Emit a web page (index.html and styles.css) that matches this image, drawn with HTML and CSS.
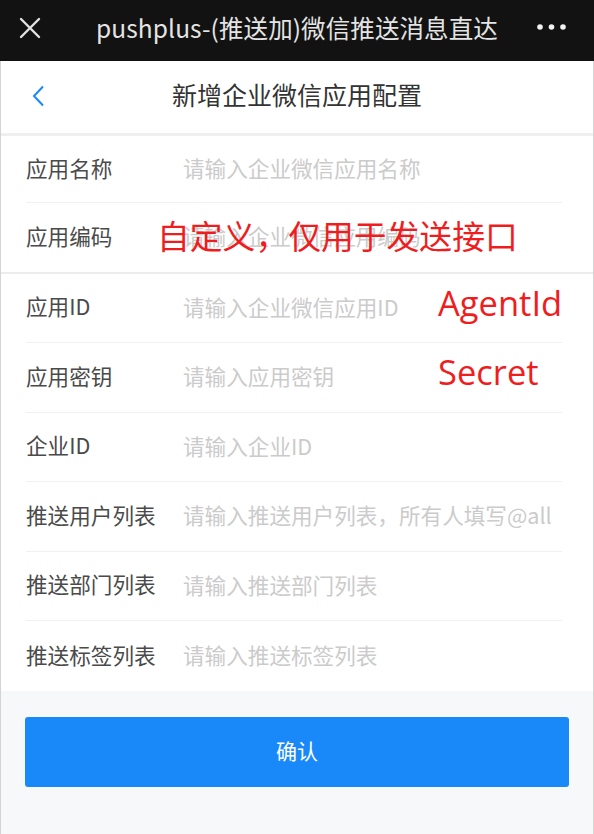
FILE: index.html
```html
<!DOCTYPE html>
<html lang="zh-CN">
<head>
<meta charset="utf-8">
<title>新增企业微信应用配置</title>
<link rel="stylesheet" href="styles.css">
</head>
<body>
<div class="topbar">
  <svg class="close-icon" width="22" height="22" viewBox="0 0 22 22"><path d="M2 2 L20 20 M20 2 L2 20" stroke="#e2e2e2" stroke-width="2.4" fill="none" stroke-linecap="round"/></svg>
  <div class="topbar-title">pushplus-(推送加)微信推送消息直达</div>
  <svg class="more-icon" width="30" height="8" viewBox="0 0 30 8"><circle cx="3" cy="4" r="2.8" fill="#f2f2f2"/><circle cx="14.5" cy="4" r="2.8" fill="#f2f2f2"/><circle cx="26" cy="4" r="2.8" fill="#f2f2f2"/></svg>
</div>
<div class="page">
  <div class="navbar">
    <svg class="back-icon" width="14" height="22" viewBox="0 0 14 22"><path d="M11 1.5 L2 11 L11 20.5" stroke="#1989fa" stroke-width="2" fill="none"/></svg>
    <div class="navbar-title">新增企业微信应用配置</div>
    <div></div>
  </div>
  <div class="strip"></div>
  <div class="group">
    <div class="field field-first"><label class="label">应用名称</label><input class="input" placeholder="请输入企业微信应用名称"></div>
    <div class="divider"></div>
    <div class="field"><label class="label">应用编码</label><input class="input" placeholder="请输入企业微信应用编码"><span class="note note-code">自定义，仅用于发送接口</span></div>
  </div>
  <div class="group-line"></div>
  <div class="group">
    <div class="field"><label class="label">应用ID</label><input class="input" placeholder="请输入企业微信应用ID"><span class="note note-latin">AgentId</span></div>
    <div class="divider"></div>
    <div class="field"><label class="label">应用密钥</label><input class="input" placeholder="请输入应用密钥"><span class="note note-latin">Secret</span></div>
    <div class="divider"></div>
    <div class="field"><label class="label">企业ID</label><input class="input" placeholder="请输入企业ID"></div>
    <div class="divider"></div>
    <div class="field"><label class="label">推送用户列表</label><input class="input" placeholder="请输入推送用户列表，所有人填写@all"></div>
    <div class="divider"></div>
    <div class="field"><label class="label">推送部门列表</label><input class="input" placeholder="请输入推送部门列表"></div>
    <div class="divider"></div>
    <div class="field field-last"><label class="label">推送标签列表</label><input class="input" placeholder="请输入推送标签列表"></div>
  </div>
  <div class="actions">
    <button class="btn-primary">确认</button>
  </div>
</div>
</body>
</html>
```
FILE: styles.css
```css
* { box-sizing: border-box; }
html, body { margin: 0; padding: 0; }
body {
  width: 594px;
  min-height: 834px;
  background: #f7f8fa;
  font-family: "Noto Sans CJK SC", "Noto Sans", sans-serif;
}
.topbar {
  height: 61px;
  background: #121212;
  display: flex;
  align-items: center;
}
.close-icon { margin-left: 19px; margin-top: -6px; flex: none; }
.topbar-title {
  margin-left: 55px;
  color: #e4e4e4;
  font-size: 24.5px;
  line-height: 1;
  margin-top: -5px;
  white-space: nowrap;
  letter-spacing: 0.1px;
}
.more-icon { margin-left: auto; margin-right: 27px; margin-top: -7px; flex: none; }
.page {
  border-left: 1px solid #d4d4d4;
  border-right: 1px solid #d4d4d4;
  min-height: 773px;
  background: #f7f8fa;
}
.navbar {
  height: 72px;
  background: #fff;
  display: grid;
  grid-template-columns: 1fr auto 1fr;
  align-items: center;
}
.back-icon { margin-left: 31px; margin-top: -2px; }
.navbar-title {
  font-size: 25px;
  color: #333;
  line-height: 1;
  margin-top: -6px;
}
.strip { height: 3px; background: #efefef; }
.group { background: #fff; }
.group-line { height: 2px; background: #ececec; }
.field {
  position: relative;
  height: 68.5px;
  display: flex;
  align-items: center;
  padding-left: 25px;
  padding-bottom: 3px;
}
.field-first { height: 66px; }
.field-last { height: 70px; }
.label {
  width: 157px;
  flex: none;
  font-size: 21.6px;
  color: #4a4a4a;
  line-height: 1;
}
.input {
  flex: 1;
  min-width: 0;
  border: 0;
  outline: none;
  background: transparent;
  padding: 0;
  margin-right: 30px;
  font-family: "Noto Sans CJK SC", "Noto Sans", sans-serif;
  font-size: 21.6px;
  color: #333;
}
.input::placeholder { color: #cbcbcb; }
.divider {
  height: 1px;
  background: #f1f1f1;
  margin: 0 31px 0 25px;
}
.note {
  position: absolute;
  color: #ef1d1d;
  white-space: nowrap;
  line-height: 1;
}
.note-code {
  left: 156px;
  top: 16px;
  font-size: 32.8px;
}
.note-latin {
  left: 437px;
  top: 12px;
  font-family: "Open Sans", "Noto Sans", sans-serif;
  font-size: 34.5px;
}
.actions { padding: 26px 24px 0 24px; }
.btn-primary {
  display: block;
  width: 544px;
  height: 70px;
  border: 0;
  border-radius: 3px;
  background: #1989fa;
  color: #fff;
  font-family: "Noto Sans CJK SC", "Noto Sans", sans-serif;
  font-size: 21px;
  padding: 0 0 4px 0;
}
```
